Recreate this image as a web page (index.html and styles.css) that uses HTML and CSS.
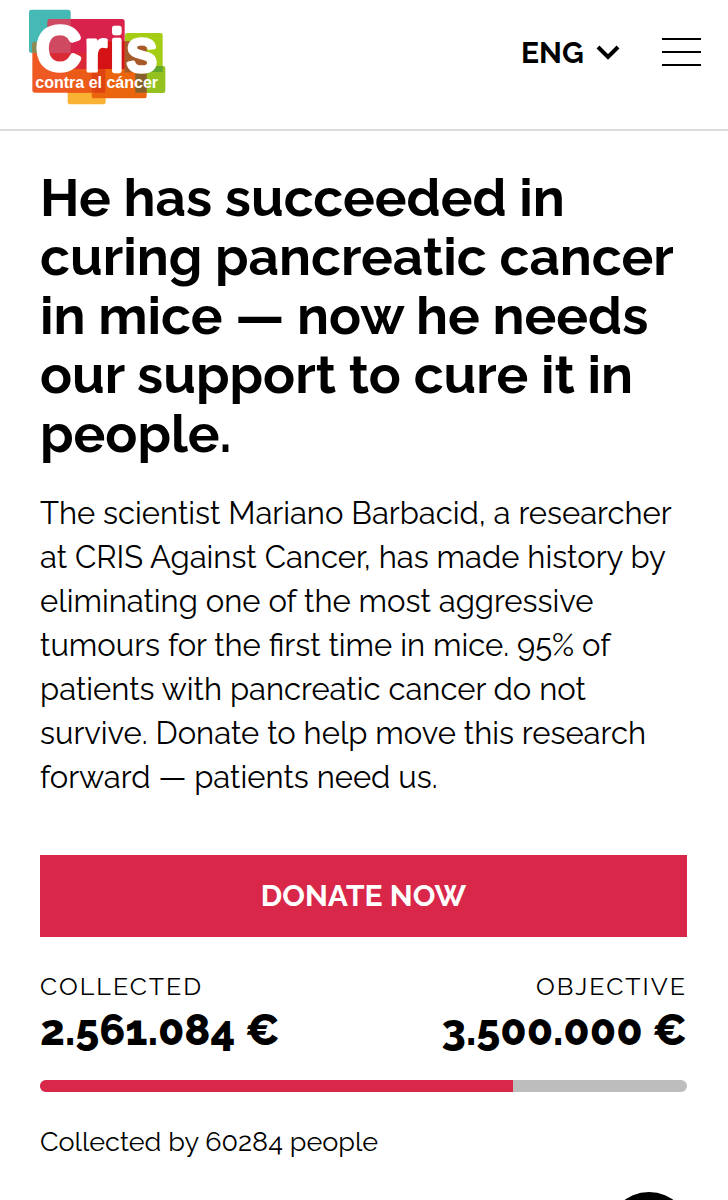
FILE: index.html
```html
<!DOCTYPE html>
<html lang="en">
<head>
    <meta charset="UTF-8">
    <meta name="viewport" content="width=device-width, initial-scale=1.0">
    <title>Cris contra el cáncer</title>
    <link rel="stylesheet" href="styles.css">
</head>
<body>
    <header class="header">
        <a class="logo" href="#" aria-label="Cris contra el cáncer">
            <svg viewBox="27 27 411 288" width="137" height="96">
                <rect x="27" y="29" width="125" height="130" rx="8" fill="#45bab5"/>
                <rect x="315" y="99" width="113" height="118" rx="7" fill="#a5cd16"/>
                <rect x="350" y="198" width="86" height="81" rx="7" fill="#94c11f"/>
                <path d="M375 198h53v18h-53z" fill="#62a62e"/>
                <rect x="143" y="205" width="114" height="108" rx="8" fill="#f9b233"/>
                <rect x="37" y="126" width="218" height="152" rx="8" fill="#ef5a24"/>
                <rect x="83" y="57" width="231" height="150" rx="8" fill="#d8214b"/>
                <path d="M91 57h61v102H83V65q0-8 8-8z" fill="#cf4a60"/>
                <path d="M37 134q0-8 8-8h38v33H37z" fill="#8a8a55"/>
                <path d="M83 159h145v48H83z" fill="#d92a35"/>
                <rect x="215" y="124" width="165" height="171" rx="8" fill="#ea650d"/>
                <path d="M223 124h91v83h-99v-75q0-8 8-8z" fill="#d51317"/>
                <path d="M314 124h58q8 0 8 8v85h-66z" fill="#a65a2a"/>
                <path d="M346 217h34v61h-34z" fill="#86602a"/>
                <path d="M143 207h72v71h-72z" fill="#ec5a18"/>
                <path d="M215 207h41v71h-33q-8 0-8-8z" fill="#e04312"/>
                <g class="logo-name">
                    <text class="logo-initial" x="50" y="206" font-size="180">C</text>
                    <text y="212" x="192 271 321" font-size="178"><tspan class="logo-r">r</tspan>is</text>
                </g>
                <text class="logo-tag" x="46" y="263" font-size="48">contra el cáncer</text>
            </svg>
        </a>
        <div class="header-tools">
            <div class="lang">
                <select class="lang-select" aria-label="Language">
                    <option>ENG</option>
                    <option>ESP</option>
                </select>
                <svg class="lang-arrow" viewBox="0 0 24 16" width="24" height="16">
                    <path d="M2 3l10 10L22 3" fill="none" stroke="#000" stroke-width="4"/>
                </svg>
            </div>
            <button class="menu" type="button" aria-label="Menu">
                <span></span>
                <span></span>
                <span></span>
            </button>
        </div>
    </header>

    <main class="campaign">
        <h1>He has succeeded in curing pancreatic cancer in mice — now he needs our support to cure it in people.</h1>
        <p class="intro">The scientist Mariano Barbacid, a researcher at CRIS Against Cancer, has made history by eliminating one of the most aggressive tumours for the first time in mice. 95% of patients with pancreatic cancer do not survive. Donate to help move this research forward — patients need us.</p>
        <a class="donate" href="#">DONATE NOW</a>
        <dl class="totals">
            <div>
                <dt>COLLECTED</dt>
                <dd>2.561.084 €</dd>
            </div>
            <div class="objective">
                <dt>OBJECTIVE</dt>
                <dd>3.500.000 €</dd>
            </div>
        </dl>
        <div class="bar">
            <div class="bar-fill" style="width: 73.17%"></div>
        </div>
        <p class="donors">Collected by 60284 people</p>
    </main>

    <button class="floating" type="button" aria-label="Help"></button>
</body>
</html>
```

FILE: styles.css
```css
* {
    box-sizing: border-box;
}
body {
    margin: 0;
    background-color: #fff;
    color: #000;
    font-family: Raleway, Lato, sans-serif;
}
.header {
    display: flex;
    justify-content: space-between;
    align-items: flex-start;
    height: 131px;
    padding: 9px 27px 0 29px;
    border-bottom: 2px solid #ddd;
}
.logo svg {
    display: block;
}
.logo text {
    font-family: "Liberation Sans", Arial, sans-serif;
    fill: #fff;
}
.logo-name {
    stroke: #fff;
    stroke-width: 13;
    stroke-linejoin: round;
}
.logo-initial {
    stroke-width: 20;
}
.logo-r {
    font-weight: bold;
    stroke-width: 9;
}
.logo-tag {
    font-weight: bold;
}
.header-tools {
    display: flex;
    align-items: center;
    gap: 42px;
    height: 86px;
}
.lang {
    display: flex;
    align-items: center;
    gap: 12px;
}
.lang-select {
    appearance: none;
    padding: 0;
    border: none;
    background: none;
    color: #000;
    font-family: inherit;
    font-size: 30px;
    font-weight: bold;
}
.menu {
    display: flex;
    flex-direction: column;
    gap: 11px;
    width: 39px;
    padding: 0;
    border: none;
    background: none;
    cursor: pointer;
}
.menu span {
    width: 100%;
    height: 2px;
    background-color: #000;
}
.campaign {
    padding: 37px 41px 0 40px;
}
h1 {
    margin: 0 0 28px;
    font-size: 53px;
    line-height: 59px;
}
.intro {
    margin: 0 0 56px;
    font-size: 31px;
    line-height: 44px;
}
.donate {
    display: block;
    background-color: #d82748;
    color: #fff;
    font-size: 30px;
    font-weight: bold;
    line-height: 82px;
    text-align: center;
    text-decoration: none;
}
.totals {
    display: flex;
    justify-content: space-between;
    margin: 31px 0 24px;
}
.objective {
    text-align: right;
}
dt {
    font-size: 25px;
    line-height: 36px;
    letter-spacing: 2px;
}
dd {
    margin: 0;
    font-size: 43px;
    font-weight: 800;
    line-height: 52px;
}
.bar {
    height: 12px;
    border-radius: 6px;
    background-color: #bdbdbd;
    overflow: hidden;
}
.bar-fill {
    height: 100%;
    background-color: #d82748;
}
.donors {
    margin: 32px 0;
    font-size: 27px;
    line-height: 36px;
}
.floating {
    position: fixed;
    right: 37px;
    bottom: -76px;
    width: 84px;
    height: 84px;
    border: none;
    border-radius: 50%;
    background-color: #000;
}
```
